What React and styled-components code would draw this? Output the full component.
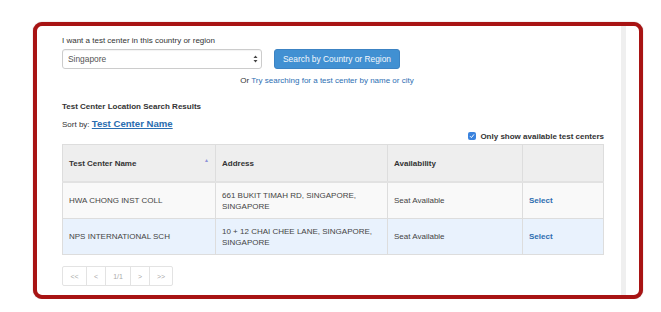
import React from 'react'
import styled, { createGlobalStyle } from 'styled-components'

const GlobalStyle = createGlobalStyle`
  html, body {
    margin: 0;
    padding: 0;
    background: #ffffff;
  }
  body {
    font-family: 'Liberation Sans', Arial, sans-serif;
    color: #333333;
  }
`

const rows = [
  {
    name: 'HWA CHONG INST COLL',
    address: ['661 BUKIT TIMAH RD, SINGAPORE,', 'SINGAPORE'],
    availability: 'Seat Available',
  },
  {
    name: 'NPS INTERNATIONAL SCH',
    address: ['10 + 12 CHAI CHEE LANE, SINGAPORE,', 'SINGAPORE'],
    availability: 'Seat Available',
  },
]

const pages = [
  { label: '<<', width: 25 },
  { label: '<', width: 20 },
  { label: '1/1', width: 26 },
  { label: '>', width: 20 },
  { label: '>>', width: 24 },
]

const App = () => {
  return (
    <>
      <GlobalStyle />
      <Frame>
        <Content>
          <Label>I want a test center in this country or region</Label>
          <SearchRow>
            <SelectBox>
              <span>Singapore</span>
              <Arrows>
                <svg width='5' height='8' viewBox='0 0 5 8'>
                  <path d='M2.5 0.5 L4.5 3 L0.5 3 Z' fill='#444' />
                  <path d='M2.5 7.5 L4.5 5 L0.5 5 Z' fill='#444' />
                </svg>
              </Arrows>
            </SelectBox>
            <SearchButton type='button'>Search by Country or Region</SearchButton>
          </SearchRow>
          <OrLine>
            Or <a href='#'>Try searching for a test center by name or city</a>
          </OrLine>
          <Heading>Test Center Location Search Results</Heading>
          <SortLine>
            Sort by: <a href='#'>Test Center Name</a>
          </SortLine>
          <FilterLine>
            <CheckBox>
              <svg width='6' height='6' viewBox='0 0 6 6'>
                <path d='M1 3.2 L2.4 4.6 L5 1.4' stroke='#fff' strokeWidth='1' fill='none' />
              </svg>
            </CheckBox>
            Only show available test centers
          </FilterLine>
          <Table>
            <colgroup>
              <col style={{ width: 153 }} />
              <col style={{ width: 172 }} />
              <col style={{ width: 135 }} />
              <col />
            </colgroup>
            <thead>
              <tr>
                <Th>
                  <HeadInner>
                    Test Center Name
                    <SortArrow>▲</SortArrow>
                  </HeadInner>
                </Th>
                <Th>Address</Th>
                <Th>Availability</Th>
                <Th />
              </tr>
            </thead>
            <tbody>
              {rows.map((row, i) => (
                <Row key={row.name} $highlight={i === 1}>
                  <Td>{row.name}</Td>
                  <Td>
                    {row.address[0]}
                    <br />
                    {row.address[1]}
                  </Td>
                  <Td>{row.availability}</Td>
                  <Td>
                    <SelectLink href='#'>Select</SelectLink>
                  </Td>
                </Row>
              ))}
            </tbody>
          </Table>
          <Pager>
            {pages.map((p) => (
              <PageButton key={p.label} style={{ width: p.width }}>
                {p.label}
              </PageButton>
            ))}
          </Pager>
        </Content>
        <ScrollStrip />
        <RightGutter />
      </Frame>
    </>
  )
}

const Frame = styled.div`
  box-sizing: border-box;
  margin: 22px 0 0 33px;
  width: 610px;
  height: 277px;
  border: 4px solid #a81414;
  border-radius: 9px;
  box-shadow: 0 0 1px rgba(90, 0, 0, 0.6);
  display: flex;
  overflow: hidden;
  background: #ffffff;
`

const Content = styled.div`
  flex: 1;
  padding: 9px 17px 0 25px;
  font-size: 8px;
  line-height: 11px;
  min-width: 0;
  a {
    color: #2d6fb3;
    text-decoration: none;
  }
`

const ScrollStrip = styled.div`
  width: 5px;
  background: #efefef;
`

const RightGutter = styled.div`
  width: 13px;
`

const Label = styled.div`
  color: #333;
  margin-bottom: 3px;
`

const SearchRow = styled.div`
  display: flex;
  gap: 12px;
  align-items: center;
`

const SelectBox = styled.div`
  box-sizing: border-box;
  width: 200px;
  height: 20px;
  border: 1px solid #cccccc;
  border-radius: 3px;
  display: flex;
  align-items: center;
  justify-content: space-between;
  padding: 0 3px 0 5px;
  font-size: 8.4px;
  color: #555;
  box-shadow: inset 0 1px 1px rgba(0, 0, 0, 0.05);
`

const Arrows = styled.span`
  display: flex;
  align-items: center;
`

const SearchButton = styled.button`
  box-sizing: border-box;
  width: 126px;
  height: 20px;
  border: 1px solid #3c83c3;
  border-radius: 3px;
  background: #4190d2;
  color: #f4f8fc;
  font-family: 'Liberation Sans', Arial, sans-serif;
  font-size: 8.4px;
  padding: 0;
`

const OrLine = styled.div`
  margin-top: 6px;
  text-align: center;
  padding-right: 12px;
  color: #333;
`

const Heading = styled.div`
  margin-top: 15px;
  font-weight: bold;
  color: #333;
`

const SortLine = styled.div`
  margin-top: 5px;
  line-height: 13px;
  a {
    font-size: 9.6px;
    font-weight: bold;
    text-decoration: underline;
    color: #2a6db0;
  }
`

const FilterLine = styled.div`
  display: flex;
  justify-content: flex-end;
  align-items: center;
  gap: 4px;
  font-weight: bold;
  color: #333;
  height: 12px;
  margin-top: -1px;
`

const CheckBox = styled.span`
  width: 8px;
  height: 8px;
  border-radius: 2px;
  background: #3a83de;
  display: flex;
  align-items: center;
  justify-content: center;
`

const Table = styled.table`
  width: 100%;
  margin-top: 2px;
  border-collapse: collapse;
  table-layout: fixed;
  border: 1px solid #dddddd;
`

const Th = styled.th`
  height: 36px;
  padding: 0 6px;
  text-align: left;
  font-weight: bold;
  background: #eeeeee;
  border: 1px solid #dddddd;
  border-bottom: 2px solid #e2e2e2;
  color: #333;
`

const HeadInner = styled.div`
  display: flex;
  justify-content: space-between;
  align-items: center;
`

const SortArrow = styled.span`
  font-size: 5px;
  color: #8e93d8;
  margin-top: -6px;
`

const Row = styled.tr`
  background: ${(p) => (p.$highlight ? '#e9f2fd' : '#f9f9f9')};
`

const Td = styled.td`
  height: 35px;
  padding: 0 6px;
  border: 1px solid #dddddd;
  color: #444;
  vertical-align: middle;
`

const SelectLink = styled.a`
  font-weight: bold;
  color: #2d6db0 !important;
`

const Pager = styled.div`
  display: flex;
  margin-top: 11px;
`

const PageButton = styled.span`
  box-sizing: border-box;
  height: 20px;
  display: flex;
  align-items: center;
  justify-content: center;
  border: 1px solid #e3e3e3;
  margin-left: -1px;
  color: #aaaaaa;
  font-size: 7px;
  &:first-child {
    margin-left: 0;
    border-radius: 2px 0 0 2px;
  }
  &:last-child {
    border-radius: 0 2px 2px 0;
  }
`

export default App
